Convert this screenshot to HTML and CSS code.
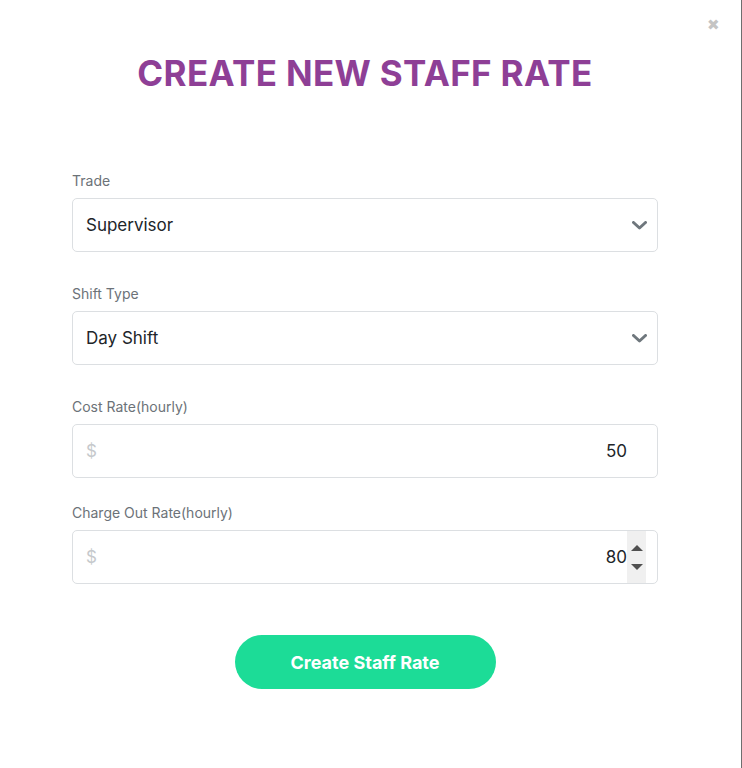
FILE: index.html
```html
<!DOCTYPE html>
<html lang="en">
<head>
    <meta charset="UTF-8">
    <meta name="viewport" content="width=device-width, initial-scale=1.0">
    <title>Create New Staff Rate</title>
    <link rel="stylesheet" href="styles.css">
</head>
<body>
    <div class="modal">
        <button type="button" class="close-btn" aria-label="Close">&#x2716;</button>
        <h1 class="modal-title">CREATE NEW STAFF RATE</h1>

        <form class="rate-form">
            <div class="form-group select-group">
                <label class="form-label">Trade</label>
                <div class="form-control">
                    <span class="control-value">Supervisor</span>
                    <svg class="chevron" width="15" height="9" viewBox="0 0 15 9"><path d="M1.5 1.5 L7.5 7 L13.5 1.5" fill="none" stroke="#6f777d" stroke-width="3" stroke-linecap="round" stroke-linejoin="round"/></svg>
                </div>
            </div>

            <div class="form-group select-group">
                <label class="form-label">Shift Type</label>
                <div class="form-control">
                    <span class="control-value">Day Shift</span>
                    <svg class="chevron" width="15" height="9" viewBox="0 0 15 9"><path d="M1.5 1.5 L7.5 7 L13.5 1.5" fill="none" stroke="#6f777d" stroke-width="3" stroke-linecap="round" stroke-linejoin="round"/></svg>
                </div>
            </div>

            <div class="form-group input-group">
                <label class="form-label">Cost Rate(hourly)</label>
                <div class="form-control money">
                    <span class="currency">$</span>
                    <span class="amount">50</span>
                    <span class="spin-space"></span>
                </div>
            </div>

            <div class="form-group input-group">
                <label class="form-label">Charge Out Rate(hourly)</label>
                <div class="form-control money">
                    <span class="currency">$</span>
                    <span class="amount">80</span>
                    <span class="spinner">
                        <span class="arrow up"></span>
                        <span class="arrow down"></span>
                    </span>
                </div>
            </div>

            <div class="actions">
                <button type="button" class="submit-btn">Create Staff Rate</button>
            </div>
        </form>
    </div>
</body>
</html>
```

FILE: styles.css
```css
html, body {
    margin: 0;
    padding: 0;
    background-color: #ffffff;
}

body {
    font-family: Inter, "Open Sans", Arial, sans-serif;
    color: #212529;
}

.modal {
    position: relative;
    box-sizing: border-box;
    width: 742px;
    height: 768px;
    padding: 51px 83px 0 72px;
    background-color: #ffffff;
    border-right: 1px solid #6e6e6e; /* edge of the dialog */
}

.close-btn {
    position: absolute;
    top: 16px;
    right: 21px;
    padding: 0;
    border: none;
    background: none;
    color: #c4c4c4;
    font-size: 15px;
    line-height: 18px;
    cursor: pointer;
}

.modal-title {
    margin: 0 0 76px;
    text-align: center;
    font-size: 35px;
    line-height: 44px;
    font-weight: 700;
    color: #8e3f96; /* purple heading */
    letter-spacing: 0.35px;
}

.form-group {
    display: flex;
    flex-direction: column;
}

.select-group {
    margin-bottom: 32px;
}

.input-group {
    margin-bottom: 25px;
}

.form-label {
    font-size: 14px;
    line-height: 20px;
    color: #6c7278;
    margin-bottom: 7px;
}

.form-control {
    box-sizing: border-box;
    height: 54px;
    display: flex;
    align-items: center;
    padding: 0 11px 0 13px;
    border: 1px solid #dcdfe2;
    border-radius: 5px;
    font-size: 17px;
    color: #212529;
}

.control-value {
    flex: 1;
}

.chevron {
    margin-right: -1px;
}

.currency {
    color: #c6c9cc;
    font-size: 17px;
}

.amount {
    flex: 1;
    text-align: right;
}

.spin-space {
    width: 19px;
}

.spinner {
    width: 19px;
    align-self: stretch;
    display: flex;
    flex-direction: column;
    justify-content: center;
    align-items: center;
    gap: 13px;
    background-color: #f0f0f0;
}

.arrow {
    width: 0;
    height: 0;
    border-left: 6px solid transparent;
    border-right: 6px solid transparent;
}

.arrow.up {
    border-bottom: 6px solid #505050;
}

.arrow.down {
    border-top: 6px solid #505050;
}

.actions {
    display: flex;
    justify-content: center;
    margin-top: 51px;
}

.submit-btn {
    width: 261px;
    height: 54px;
    border: none;
    border-radius: 27px;
    background-color: #1cdc97; /* green call to action */
    color: #ffffff;
    font-family: inherit;
    font-size: 18px;
    font-weight: 700;
    cursor: pointer;
}
```
